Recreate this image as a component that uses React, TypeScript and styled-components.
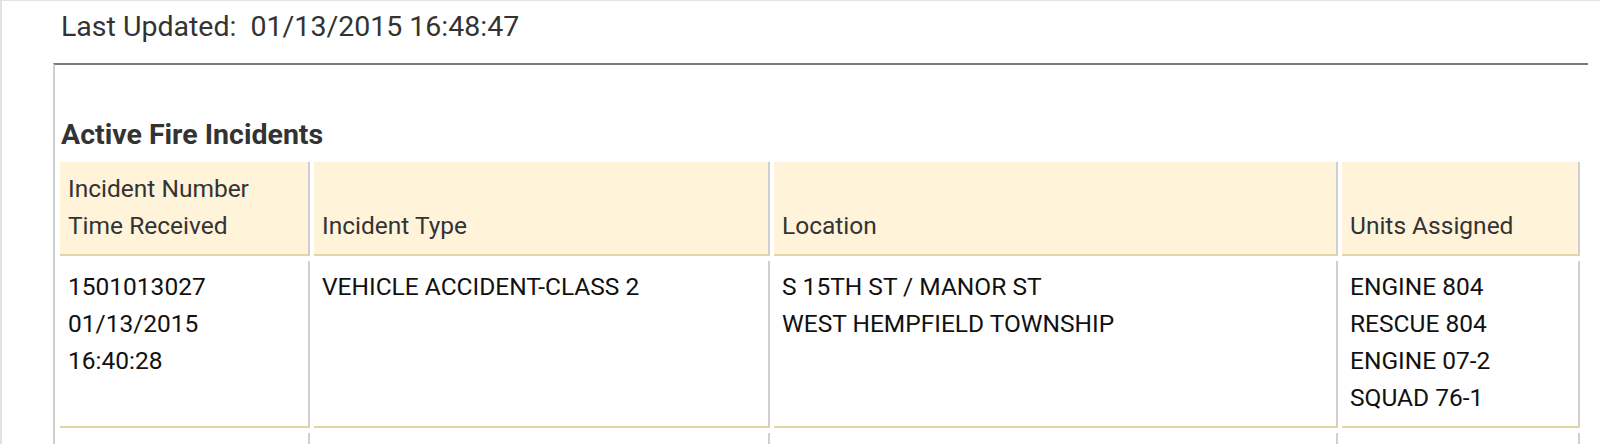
import React from "react";
import styled, { createGlobalStyle } from "styled-components";

type Incident = {
  number: string;
  date: string;
  time: string;
  type: string;
  location: string[];
  units: string[];
};

const incidents: Incident[] = [
  {
    number: "1501013027",
    date: "01/13/2015",
    time: "16:40:28",
    type: "VEHICLE ACCIDENT-CLASS 2",
    location: ["S 15TH ST / MANOR ST", "WEST HEMPFIELD TOWNSHIP"],
    units: ["ENGINE 804", "RESCUE 804", "ENGINE 07-2", "SQUAD 76-1"],
  },
  {
    number: "1501013019",
    date: "01/13/2015",
    time: "16:21:05",
    type: "AUTOMATIC FIRE ALARM",
    location: ["1200 BLK HARRISBURG PIKE", "LANCASTER TOWNSHIP"],
    units: ["ENGINE 2-1", "TRUCK 2"],
  },
];

const columns = [
  { label: ["Incident Number", "Time Received"], width: 250 },
  { label: ["Incident Type"], width: 456 },
  { label: ["Location"], width: 564 },
  { label: ["Units Assigned"], width: 238 },
];

function App() {
  return (
    <>
      <GlobalStyle />
      <Frame>
        <Updated>Last Updated:&nbsp; 01/13/2015 16:48:47</Updated>
        <Panel>
          <Heading>Active Fire Incidents</Heading>
          <IncidentTable>
            <thead>
              <tr>
                {columns.map((c) => (
                  <HeadCell key={c.label[0]} style={{ width: c.width }}>
                    {c.label.map((l) => (
                      <Line key={l}>{l}</Line>
                    ))}
                  </HeadCell>
                ))}
              </tr>
            </thead>
            <tbody>
              {incidents.map((inc) => (
                <tr key={inc.number}>
                  <Cell>
                    <Line>{inc.number}</Line>
                    <Line>{inc.date}</Line>
                    <Line>{inc.time}</Line>
                  </Cell>
                  <Cell>
                    <Line>{inc.type}</Line>
                  </Cell>
                  <Cell>
                    {inc.location.map((l) => (
                      <Line key={l}>{l}</Line>
                    ))}
                  </Cell>
                  <Cell>
                    {inc.units.map((u) => (
                      <Line key={u}>{u}</Line>
                    ))}
                  </Cell>
                </tr>
              ))}
            </tbody>
          </IncidentTable>
        </Panel>
      </Frame>
    </>
  );
}

const GlobalStyle = createGlobalStyle`
  html, body {
    margin: 0;
    padding: 0;
    background: #fff;
    overflow: hidden;
  }
  body {
    font-family: Roboto, "Liberation Sans", Arial, sans-serif;
    color: #222;
  }
`;

const Frame = styled.div`
  height: 100vh;
  overflow: hidden;
  border-top: 1px solid #e2e2e2;
  border-left: 2px solid #e2e2e2;
  box-sizing: border-box;
`;

const Updated = styled.div`
  padding: 9px 0 0 59px;
  font-size: 28.5px;
  line-height: 33px;
  color: #333;
`;

const Panel = styled.div`
  margin: 20px 0 0 51px;
  width: 1535px;
  border-top: 2px solid #7a7a7a;
  border-left: 2px solid #cfcfcf;
  box-sizing: border-box;
  padding: 53px 0 0 1px;
`;

const Heading = styled.h3`
  margin: 0 0 6px 5px;
  font-size: 28.5px;
  line-height: 33px;
  font-weight: 700;
  color: #333;
`;

const IncidentTable = styled.table`
  width: 1528px;
  table-layout: fixed;
  border-collapse: separate;
  border-spacing: 4px 5px;
`;

const HeadCell = styled.th`
  box-sizing: border-box;
  background: #fff4d9;
  border-right: 2px solid #cfcfcf;
  border-bottom: 2px solid #e3d5a4;
  padding: 8px 8px 10px;
  text-align: left;
  vertical-align: bottom;
  font-weight: 400;
  font-size: 24.5px;
  color: #333;
`;

const Cell = styled.td`
  box-sizing: border-box;
  background: #fff;
  border-right: 2px solid #cfcfcf;
  border-bottom: 2px solid #e3d5a4;
  padding: 7px 8px 10px;
  vertical-align: top;
  font-size: 24.5px;
  color: #111;
`;

const Line = styled.div`
  line-height: 37px;
  white-space: nowrap;
`;

export default App;
